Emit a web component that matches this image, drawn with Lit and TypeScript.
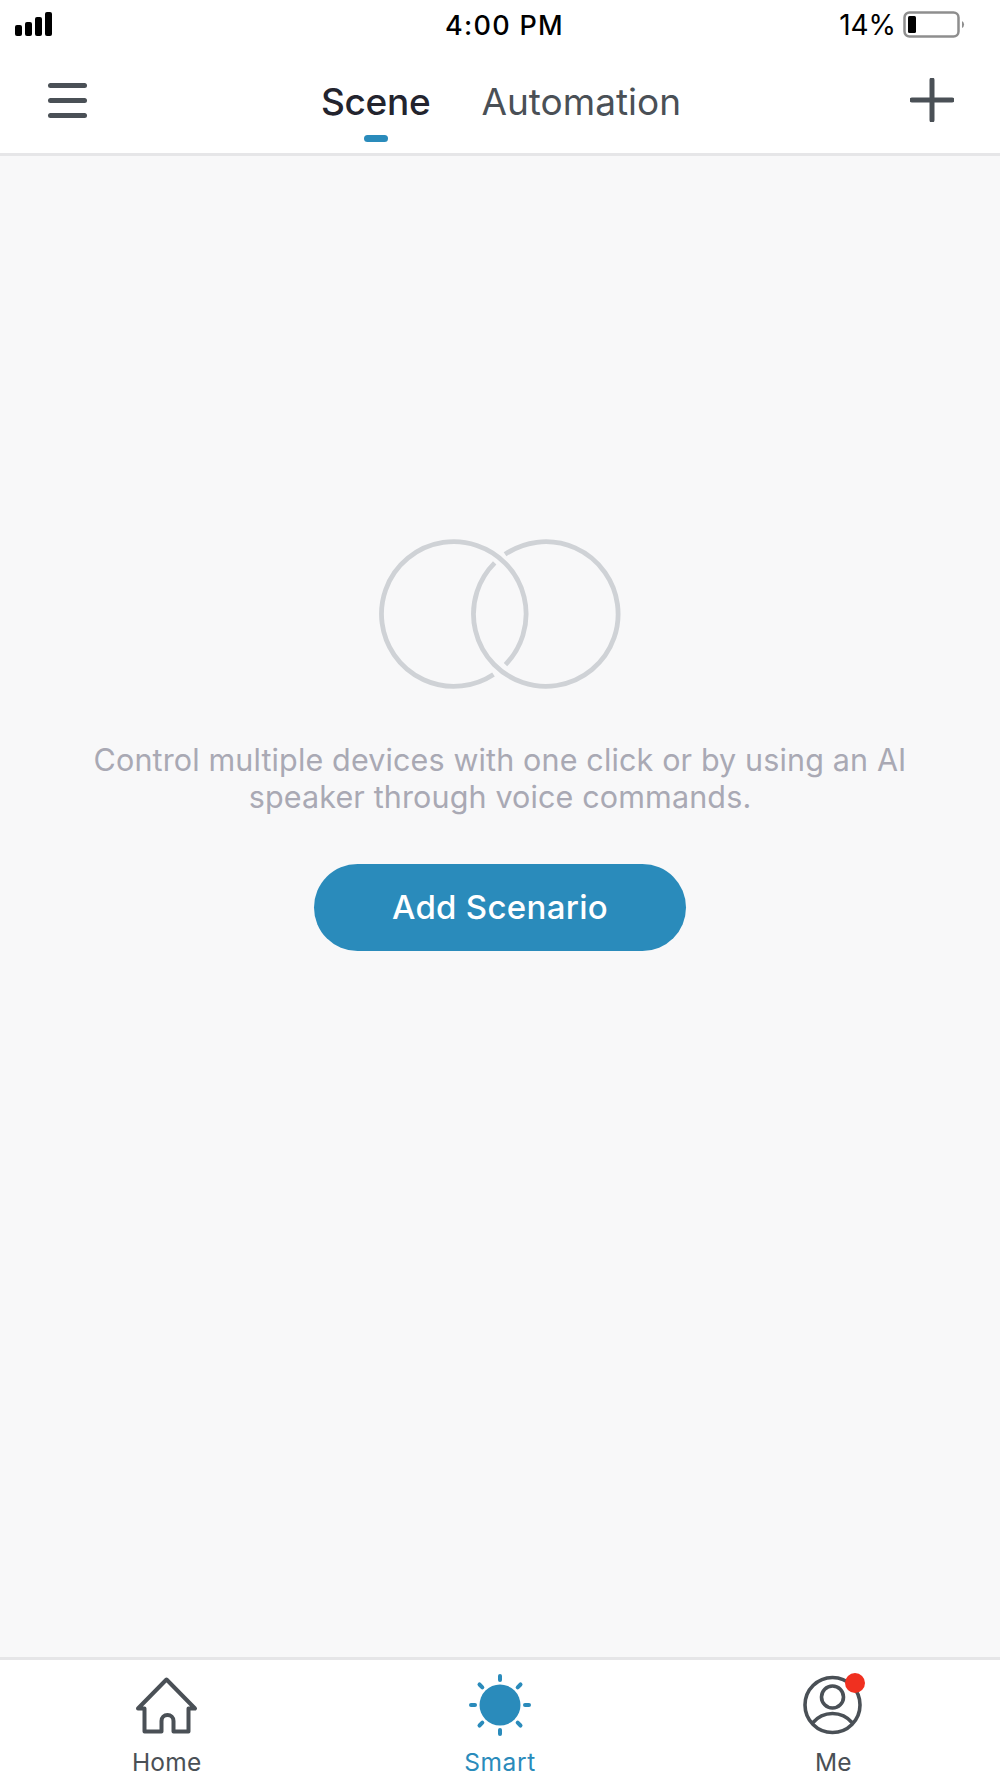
import { LitElement, html, css, svg } from 'lit'
import { customElement } from 'lit/decorators.js'

const homeIcon = svg`
  <path d="M13.5 39.5H7L35.5 10.5L64 39.5H57.5V62.5H42.5V52a6 6 0 0 0-12 0V62.5H13.5Z"
    fill="none" stroke="currentColor" stroke-width="4" stroke-linejoin="round" />
`

const rays = [0, 45, 90, 135, 180, 225, 270, 315]

const sunIcon = svg`
  <circle cx="36" cy="36" r="20.5" fill="currentColor" />
  ${rays.map(a => svg`
    <line x1="36" y1="7" x2="36" y2="11" transform="rotate(${a} 36 36)"
      stroke="currentColor" stroke-width="4" stroke-linecap="round" />
  `)}
`

const meIcon = svg`
  <circle cx="35.5" cy="36" r="27.5" fill="none" stroke="currentColor" stroke-width="3.6" />
  <circle cx="35.5" cy="28" r="11" fill="none" stroke="currentColor" stroke-width="3.6" />
  <path d="M15.5 54C21 47.5 28 44.5 35.5 44.5S50 47.5 55.5 54" fill="none" stroke="currentColor" stroke-width="3.6" />
`

// clockwise arc, the long way round from one angle to the other
const arc = (cx: number, cy: number, r: number, from: number, to: number) => {
  const point = (deg: number) => {
    const a = (deg * Math.PI) / 180
    return `${cx + r * Math.cos(a)} ${cy + r * Math.sin(a)}`
  }
  return `M${point(from)}A${r} ${r} 0 1 1 ${point(to)}`
}

@customElement('app-root')
export class AppRoot extends LitElement {
  static styles = css`
    :host {
      display: flex;
      flex-direction: column;
      height: 1778px;
      background: #f8f8f9;
      font-family: Inter, 'Noto Sans', sans-serif;
      color: #4a5056;
    }

    .status {
      display: grid;
      grid-template-columns: 1fr auto 1fr;
      align-items: center;
      height: 50px;
      padding: 0 15px;
      background: #fff;
      color: #000;
    }

    .signal {
      display: flex;
      align-items: flex-end;
      gap: 3px;
      height: 24px;
      margin-bottom: 2px;
    }

    .signal i {
      width: 7px;
      background: #000;
      border-radius: 2px;
    }

    .time {
      margin-left: 9px;
      font-size: 27px;
      font-weight: 500;
      letter-spacing: 1.3px;
    }

    .battery-wrap {
      display: flex;
      justify-content: flex-end;
      align-items: center;
      gap: 7px;
      padding-right: 20px;
      font-size: 28px;
      letter-spacing: -0.1px;
    }

    .battery {
      display: block;
      width: 62px;
      height: 28px;
    }

    .header {
      display: grid;
      grid-template-columns: 1fr auto 1fr;
      align-items: center;
      height: 103px;
      padding: 0 46px 0 48px;
      background: #fff;
      border-bottom: 3px solid #e6e6e8;
    }

    .menu {
      display: flex;
      flex-direction: column;
      gap: 10px;
      width: 39px;
      margin-bottom: 2px;
    }

    .menu i {
      height: 5px;
      border-radius: 3px;
      background: #4a5056;
    }

    .tabs {
      display: flex;
      gap: 51px;
      font-size: 37px;
    }

    .tab {
      position: relative;
      line-height: 46px;
    }

    .tab.active {
      color: #23242e;
      font-weight: 500;
      letter-spacing: -0.3px;
    }

    .tab.active::after {
      content: '';
      position: absolute;
      left: 50%;
      bottom: -17px;
      width: 24px;
      height: 7px;
      margin-left: -12px;
      border-radius: 4px;
      background: #2a8bbb;
    }

    .plus {
      justify-self: end;
      display: block;
      width: 44px;
      height: 44px;
      margin-bottom: 3px;
    }

    .main {
      flex: 1;
      display: flex;
      flex-direction: column;
      align-items: center;
      padding-top: 380px;
    }

    .rings {
      display: block;
      width: 250px;
      height: 156px;
    }

    .hint {
      margin: 49px 0 0;
      font-size: 30.5px;
      line-height: 37px;
      letter-spacing: 0.14px;
      text-align: center;
      color: #a9a9b4;
      font-weight: 400;
    }

    .add {
      margin-top: 49px;
      padding-bottom: 2px;
      width: 372px;
      height: 87px;
      border: none;
      border-radius: 44px;
      background: #2a8bbb;
      color: #fff;
      font-family: inherit;
      font-size: 33px;
      font-weight: 500;
      letter-spacing: 0.3px;
    }

    .tabbar {
      display: grid;
      grid-template-columns: repeat(3, 1fr);
      height: 121px;
      box-sizing: border-box;
      background: #fff;
      border-top: 3px solid #e6e6e8;
    }

    .item {
      display: flex;
      flex-direction: column;
      align-items: center;
      font-size: 24.5px;
      line-height: 28px;
      letter-spacing: 0.2px;
    }

    .item.active {
      color: #2a8bbb;
      letter-spacing: 0.6px;
    }

    .icon {
      position: relative;
      width: 72px;
      height: 72px;
      margin-top: 9px;
      margin-bottom: 7px;
    }

    .icon svg {
      display: block;
      width: 72px;
      height: 72px;
    }

    .dot {
      position: absolute;
      top: 4px;
      right: 4px;
      width: 20px;
      height: 20px;
      border-radius: 50%;
      background: #f03020;
    }
  `

  render() {
    return html`
      <div class="status">
        <div class="signal">
          ${[11, 14, 19, 24].map(h => html`<i style="height:${h}px"></i>`)}
        </div>
        <div class="time">4:00 PM</div>
        <div class="battery-wrap">
          <span>14%</span>
          <svg class="battery" viewBox="0 0 62 28">
            <rect x="1.5" y="1.5" width="54" height="24" rx="5" fill="none" stroke="#8e8e8e" stroke-width="2.5" />
            <rect x="5" y="5" width="8" height="17" rx="1.5" fill="#000" />
            <path d="M59 10a4 4 0 0 1 0 7Z" fill="#8e8e8e" />
          </svg>
        </div>
      </div>

      <div class="header">
        <div class="menu"><i></i><i></i><i></i></div>
        <div class="tabs">
          <div class="tab active">Scene</div>
          <div class="tab">Automation</div>
        </div>
        <svg class="plus" viewBox="0 0 44 44">
          <path d="M22 2V42M2 22H42" stroke="#4a5056" stroke-width="5" stroke-linecap="round" />
        </svg>
      </div>

      <div class="main">
        <svg class="rings" viewBox="0 0 250 156" fill="none" stroke="#cfd2d6" stroke-width="4.8">
          <path d=${arc(78.8, 78, 72.3, 56.7, 44.4)} />
          <path d=${arc(170.8, 78, 72.3, 235.7, 225)} />
        </svg>
        <p class="hint">Control multiple devices with one click or by using an AI<br />speaker through voice commands.</p>
        <button class="add">Add Scenario</button>
      </div>

      <div class="tabbar">
        <div class="item">
          <div class="icon"><svg viewBox="0 0 72 72">${homeIcon}</svg></div>
          Home
        </div>
        <div class="item active">
          <div class="icon"><svg viewBox="0 0 72 72">${sunIcon}</svg></div>
          Smart
        </div>
        <div class="item">
          <div class="icon">
            <svg viewBox="0 0 72 72">${meIcon}</svg>
            <span class="dot"></span>
          </div>
          Me
        </div>
      </div>
    `
  }
}
